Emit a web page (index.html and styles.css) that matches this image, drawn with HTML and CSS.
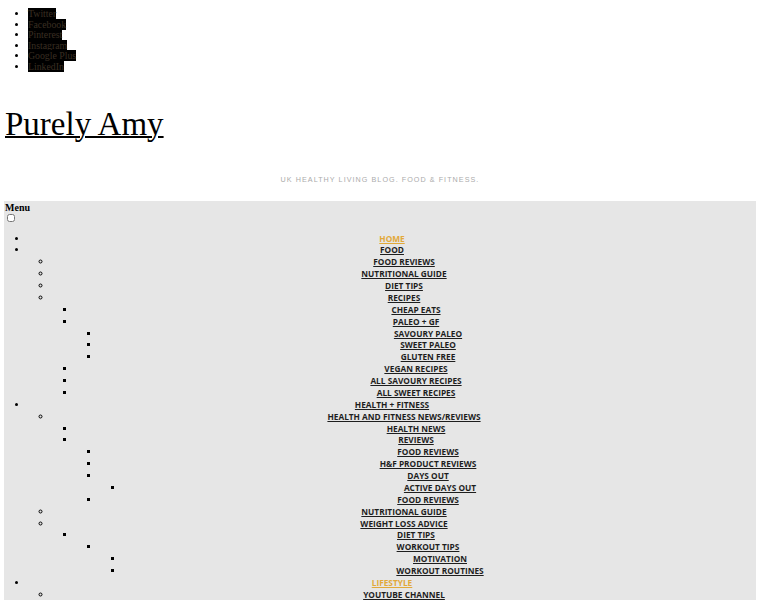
FILE: index.html
```html
<!DOCTYPE html>
<html lang="en">
<head>
<meta charset="utf-8">
<title>Purely Amy</title>
<link rel="stylesheet" href="styles.css">
</head>
<body>
<div class="page">
  <ul class="social">
    <li><a href="#">Twitter</a></li>
    <li><a href="#">Facebook</a></li>
    <li><a href="#">Pinterest</a></li>
    <li><a href="#">Instagram</a></li>
    <li><a href="#">Google Plus</a></li>
    <li><a href="#">LinkedIn</a></li>
  </ul>
  <h1 class="site-title"><a href="#">Purely Amy</a></h1>
  <p class="tagline">UK Healthy Living Blog. Food &amp; Fitness.</p>
  <nav class="nav">
    <label class="menu-label" for="menu-toggle">Menu</label>
    <input class="menu-toggle" type="checkbox" id="menu-toggle">
    <ul class="menu">
      <li><a class="current" href="#">Home</a></li>
      <li><a href="#">Food</a>
        <ul>
          <li><a href="#">Food Reviews</a></li>
          <li><a href="#">Nutritional Guide</a></li>
          <li><a href="#">Diet Tips</a></li>
          <li><a href="#">Recipes</a>
            <ul>
              <li><a href="#">Cheap Eats</a></li>
              <li><a href="#">Paleo + GF</a>
                <ul>
                  <li><a href="#">Savoury Paleo</a></li>
                  <li><a href="#">Sweet Paleo</a></li>
                  <li><a href="#">Gluten Free</a></li>
                </ul>
              </li>
              <li><a href="#">Vegan Recipes</a></li>
              <li><a href="#">All Savoury Recipes</a></li>
              <li><a href="#">All Sweet Recipes</a></li>
            </ul>
          </li>
        </ul>
      </li>
      <li><a href="#">Health + Fitness</a>
        <ul>
          <li><a href="#">Health and Fitness News/Reviews</a>
            <ul>
              <li><a href="#">Health News</a></li>
              <li><a href="#">Reviews</a>
                <ul>
                  <li><a href="#">Food Reviews</a></li>
                  <li><a href="#">H&amp;F Product Reviews</a></li>
                  <li><a href="#">Days Out</a>
                    <ul>
                      <li><a href="#">Active Days Out</a></li>
                    </ul>
                  </li>
                  <li><a href="#">Food Reviews</a></li>
                </ul>
              </li>
            </ul>
          </li>
          <li><a href="#">Nutritional Guide</a></li>
          <li><a href="#">Weight Loss Advice</a>
            <ul>
              <li><a href="#">Diet Tips</a>
                <ul>
                  <li><a href="#">Workout Tips</a>
                    <ul>
                      <li><a href="#">Motivation</a></li>
                      <li><a href="#">Workout Routines</a></li>
                    </ul>
                  </li>
                </ul>
              </li>
            </ul>
          </li>
        </ul>
      </li>
      <li><a class="current" href="#">Lifestyle</a>
        <ul>
          <li><a href="#">YouTube Channel</a></li>
        </ul>
      </li>
    </ul>
  </nav>
</div>
</body>
</html>
```
FILE: styles.css
```css
html, body {
  margin: 0;
  padding: 0;
  background: #ffffff;
}

.page {
  padding: 0 4px;
  font-family: "Liberation Serif", "Times New Roman", serif;
}

.social {
  margin: 9px 0 0 0;
  padding: 0 0 0 24px;
  font-size: 9.8px;
  line-height: 10.6px;
  list-style: disc;
}

.social a {
  background: #000000;
  color: #3a2f22;
  text-decoration: none;
}

.site-title {
  margin: 32px 0 0 1px;
  font-size: 33px;
  line-height: 39px;
  font-weight: normal;
}

.site-title a {
  color: #000000;
  text-decoration: underline;
  text-decoration-thickness: 2px;
}

.tagline {
  margin: 31px 0 0 0;
  text-align: center;
  font-family: "Liberation Sans", Arial, sans-serif;
  font-size: 7.2px;
  line-height: 10px;
  letter-spacing: 1.05px;
  text-transform: uppercase;
  color: #ababab;
}

.nav {
  margin-top: 16px;
  background: #e6e6e6;
  padding: 0 0 4px 0;
  min-height: 400px;
}

.menu-label {
  display: block;
  padding: 1px 0 0 1px;
  font-size: 10px;
  line-height: 11px;
  font-weight: bold;
  color: #000000;
}

.menu-toggle {
  display: block;
  width: 8px;
  height: 8px;
  margin: 1px 0 0 3px;
}

.menu {
  margin: 11px 0 0 0;
  padding: 0 0 0 24px;
  list-style: disc;
  text-align: center;
  font-family: "Open Sans", "Noto Sans", sans-serif;
  font-size: 8.3px;
  line-height: 11.87px;
  font-weight: 700;
  text-transform: uppercase;
}

.menu ul {
  margin: 0;
  padding: 0 0 0 24px;
  list-style: circle;
}

.menu ul ul {
  list-style: square;
}

.menu a {
  color: #1e1e1e;
  text-decoration: underline;
}

.menu a.current {
  color: #e2a93a;
}
```
